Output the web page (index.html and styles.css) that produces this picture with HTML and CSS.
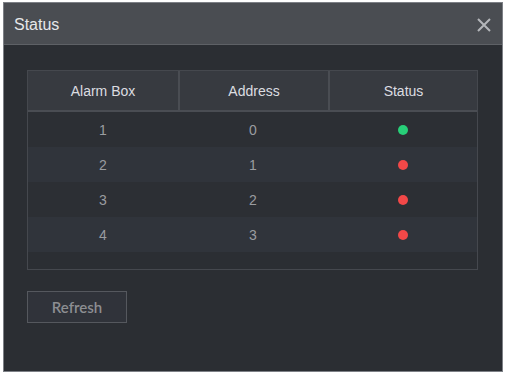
FILE: index.html
```html
<!DOCTYPE html>
<html lang="en">
<head>
    <meta charset="UTF-8">
    <title>Status</title>
    <link rel="stylesheet" href="styles.css">
</head>
<body>
<div class="dialog">
    <div class="header">
        <span class="title">Status</span>
        <svg class="close" width="14" height="14" viewBox="0 0 14 14">
            <path d="M1 1L13 13M13 1L1 13" stroke="#b4b6ba" stroke-width="2" fill="none"/>
        </svg>
    </div>
    <div class="content">
        <div class="grid">
            <div class="grid-head">
                <div class="cell">Alarm Box</div>
                <div class="cell">Address</div>
                <div class="cell">Status</div>
            </div>
            <div class="grid-body">
                <div class="row">
                    <div class="cell">1</div>
                    <div class="cell">0</div>
                    <div class="cell"><span class="dot on"></span></div>
                </div>
                <div class="row">
                    <div class="cell">2</div>
                    <div class="cell">1</div>
                    <div class="cell"><span class="dot off"></span></div>
                </div>
                <div class="row">
                    <div class="cell">3</div>
                    <div class="cell">2</div>
                    <div class="cell"><span class="dot off"></span></div>
                </div>
                <div class="row">
                    <div class="cell">4</div>
                    <div class="cell">3</div>
                    <div class="cell"><span class="dot off"></span></div>
                </div>
            </div>
        </div>
        <button class="btn">Refresh</button>
    </div>
</div>
</body>
</html>
```
FILE: styles.css
```css
*{
    padding: 0;
    margin: 0;
    box-sizing: border-box;
}
body{
    background: #fff;
    font-family: "Liberation Sans", Arial, sans-serif;
}
.dialog{
    margin: 2px 0 0 3px;
    width: 500px;
    height: 370px;
    background: #2b2e33;
    border: 1px solid #7d8086;
    display: flex;
    flex-direction: column;
}
.header{
    height: 42px;
    background: #4a4d52;
    border-bottom: 1px solid #5e6166;
    display: flex;
    align-items: center;
    justify-content: space-between;
    padding: 2px 11px 0 10px;
}
.title{
    font-size: 16px;
    color: #e6e7e9;
}
.close{
    display: block;
}
.content{
    padding: 25px 23px 0 23px;
}
.grid{
    width: 451px;
    height: 200px;
    border: 1px solid #45484e;
}
.grid-head{
    display: grid;
    grid-template-columns: 150px 150px 1fr;
    height: 41px;
    background: #373a40;
    border-bottom: 2px solid #4a4d53;
}
.grid-head .cell{
    display: flex;
    align-items: center;
    justify-content: center;
    font-size: 14px;
    color: #dcdde0;
    border-left: 2px solid #4a4d53;
}
.grid-head .cell:first-child{
    border-left: none;
}
.row{
    display: grid;
    grid-template-columns: 150px 150px 1fr;
    height: 35px;
    background: #2c2f34;
}
.row:nth-child(even){
    background: #30343b;
}
.row .cell{
    display: flex;
    align-items: center;
    justify-content: center;
    font-size: 14px;
    color: #9a9ca0;
}
.dot{
    display: inline-block;
    width: 10px;
    height: 10px;
    border-radius: 50%;
}
.dot.on{
    background: #27cf78;
}
.dot.off{
    background: #f24848;
}
.btn{
    margin-top: 21px;
    width: 100px;
    height: 32px;
    background: #30333a;
    border: 1px solid #55585e;
    color: #8c8e92;
    font-family: Lato, "Noto Sans", sans-serif;
    font-size: 15px;
    font-weight: 600;
}
```
